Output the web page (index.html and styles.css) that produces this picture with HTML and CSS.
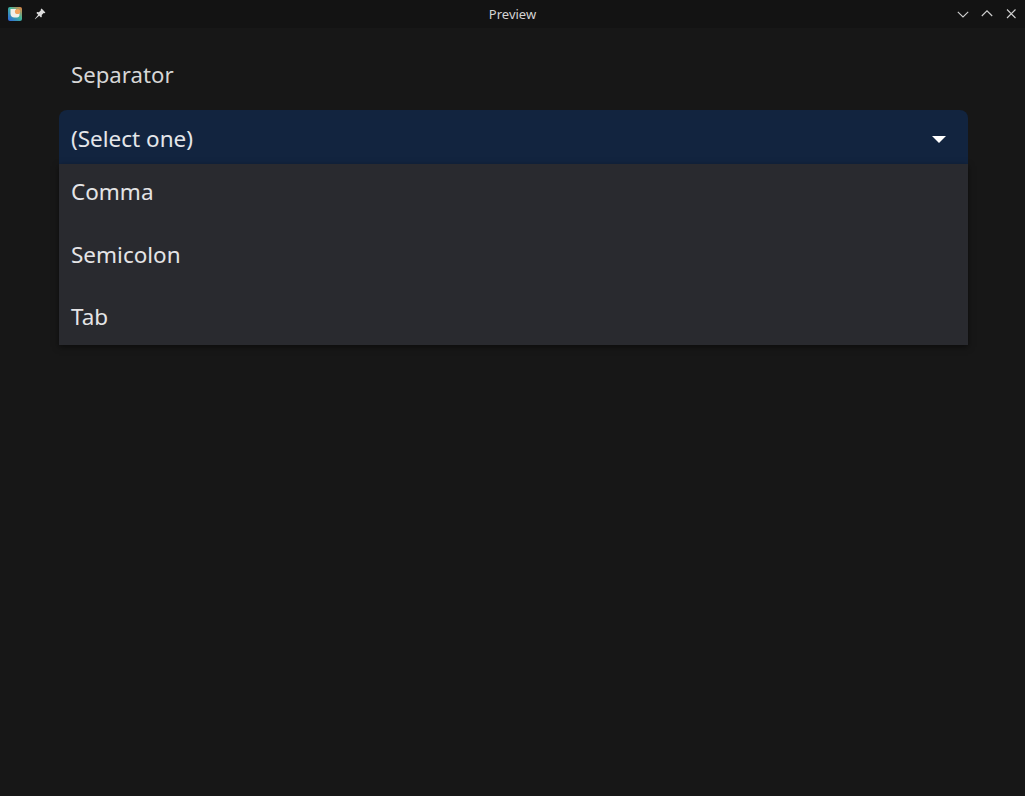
FILE: index.html
```html
<!DOCTYPE html>
<html lang="en">
<head>
    <meta charset="UTF-8">
    <title>Preview</title>
    <link rel="stylesheet" href="styles.css">
</head>
<body>
    <div class="window">
        <div class="titlebar">
            <div class="titlebar-left">
                <svg class="app-icon" width="14" height="14" viewBox="0 0 14 14">
                    <defs>
                        <linearGradient id="app-grad" x1="0" y1="1" x2="1" y2="0">
                            <stop offset="0" stop-color="#2f62e0"/>
                            <stop offset="0.55" stop-color="#3fb49a"/>
                            <stop offset="1" stop-color="#f0803c"/>
                        </linearGradient>
                    </defs>
                    <rect width="14" height="14" rx="2" fill="url(#app-grad)"/>
                    <path d="M2.5 2h5.5v3.5h3.5v2.5c0 1.500-1 2.500-2.500 2.500h-2.500c-2.500 0-4-1.500-4-4z" fill="#f2efe8"/>
                    <circle cx="9.500" cy="4.500" r="2.600" fill="#f3a45c"/>
                </svg>
                <svg class="pin-icon" width="12" height="12" viewBox="0 0 12 12">
                    <path d="M7.600 .6l3.800 3.800-.9.8-.8-.2-2 2 .1 1.700-.8.8-1.800-1.800L1.100 11.200l-.3-.3 3.400-4.200-1.800-1.800.8-.8 1.700.1 2-2-.2-.8z" fill="#dcdcdc"/>
                </svg>
            </div>
            <span class="title">Preview</span>
            <div class="titlebar-right">
                <svg width="12" height="12" viewBox="0 0 12 12"><path d="M.8 3.800L6 9l5.200-5.200" class="win-stroke"/></svg>
                <svg width="12" height="12" viewBox="0 0 12 12"><path d="M.8 8L6 2.800 11.200 8" class="win-stroke"/></svg>
                <svg width="12" height="12" viewBox="0 0 12 12"><path d="M2 1.500l8.500 8.500M10.500 1.500L2 10" class="win-stroke"/></svg>
            </div>
        </div>
        <div class="content">
            <div class="field-label">Separator</div>
            <div class="dropdown">
                <div class="dropdown-button">
                    <span>(Select one)</span>
                    <span class="caret"></span>
                </div>
                <ul class="dropdown-menu">
                    <li>Comma</li>
                    <li>Semicolon</li>
                    <li>Tab</li>
                </ul>
            </div>
        </div>
    </div>
</body>
</html>
```

FILE: styles.css
```css
html, body {
    margin: 0;
    padding: 0;
    height: 100%;
    overflow: hidden;
}
body {
    font-family: 'Noto Sans', 'Open Sans', sans-serif;
    background-color: #171717;
    color: #e8e8e8;
}
.window {
    height: 796px;
    display: flex;
    flex-direction: column;
}
.titlebar {
    height: 28px;
    flex: none;
    background-color: #131313;
    display: flex;
    align-items: center;
    justify-content: space-between;
    padding: 0 8px;
    font-size: 13px;
    color: #d4d4d4;
}
.titlebar-left {
    display: flex;
    align-items: center;
    gap: 12px;
    width: 120px;
}
.titlebar-right {
    display: flex;
    align-items: center;
    justify-content: flex-end;
    gap: 12px;
    width: 120px;
}
.win-stroke {
    fill: none;
    stroke: #d0d0d0;
    stroke-width: 1.1;
}
.content {
    flex: 1;
    padding: 29px 57px 0 59px;
}
.field-label {
    padding-left: 12px;
    font-size: 22.2px;
    line-height: 36px;
    color: #d6d6d6;
    margin-bottom: 17px;
}
.dropdown {
    position: relative;
}
.dropdown-button {
    height: 54px;
    box-sizing: border-box;
    padding: 2px 22px 0 12px;
    background-color: #12243f;
    border-radius: 8px 8px 0 0;
    display: flex;
    align-items: center;
    justify-content: space-between;
    font-size: 22.5px;
    color: #e4e6ea;
}
.caret {
    width: 0;
    height: 0;
    margin-top: 2px;
    border-left: 7px solid transparent;
    border-right: 7px solid transparent;
    border-top: 7px solid #ffffff;
}
.dropdown-menu {
    position: absolute;
    top: 54px;
    left: 0;
    right: 0;
    margin: 0;
    padding: 0;
    list-style: none;
    height: 181px;
    background-color: #292a2f;
    box-shadow: 0 2px 6px rgba(0, 0, 0, 0.5);
}
.dropdown-menu li {
    height: 62.5px;
    line-height: 56px;
    padding-left: 12px;
    font-size: 22.5px;
    color: #e4e4e6;
}
```
